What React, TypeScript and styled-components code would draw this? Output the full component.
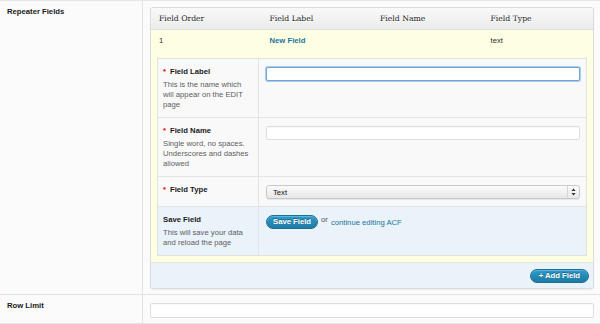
import React from 'react';
import styled, { createGlobalStyle, css } from 'styled-components';

const GlobalStyle = createGlobalStyle`
  body {
    margin: 0;
    background: #fbfbfb;
    font-family: "Liberation Sans", Arial, Helvetica, sans-serif;
    font-size: 7.7px;
    color: #333;
  }
`;

const Page = styled.div`
  width: 600px;
  height: 324px;
  background: #fbfbfb;
  overflow: hidden;
`;

const SettingRow = styled.div<{ first?: boolean }>`
  display: grid;
  grid-template-columns: 143px 1fr;
  border-top: ${({ first }) => (first ? '1px solid #e6e6e6' : 'none')};
  border-bottom: 1px solid #e3e3e3;
`;

const SettingLabel = styled.div`
  border-right: 1px solid #e3e3e3;
  padding: 6px 7px;
  font-weight: bold;
  color: #1a1a1a;
  line-height: 10px;
`;

const SettingValue = styled.div<{ compact?: boolean }>`
  padding: ${({ compact }) => (compact ? '8px 6px 5px 7px' : '6px 6px 5px 7px')};
`;

const Repeater = styled.div`
  border: 1px solid #dcdcdc;
  border-radius: 3px;
  box-shadow: 0 1px 1px rgba(0, 0, 0, 0.06);
  background: #eaf2fa;
  overflow: hidden;
`;

const Columns = styled.div`
  display: grid;
  grid-template-columns: repeat(4, 1fr);
`;

const HeadRow = styled(Columns)`
  height: 21px;
  align-items: center;
  background: linear-gradient(#f9f9f9, #ebebeb);
  border-bottom: 1px solid #e0e0e0;
`;

const HeadCell = styled.div`
  padding-left: 8px;
  font-family: "DejaVu Serif", Georgia, serif;
  font-size: 7.7px;
  color: #222;
  text-shadow: 0 1px 0 #fff;
`;

const FieldBlock = styled.div`
  background: #fefee3;
  padding: 0 6px 6px 6px;
  border-bottom: 1px solid #e6e6d4;
`;

const SummaryRow = styled(Columns)`
  height: 21px;
  align-items: center;
  margin: 0 -6px 7px -6px;
`;

const SummaryCell = styled.div`
  padding-left: 8px;
  color: #333;
`;

const FieldLink = styled.a`
  color: #21759b;
  font-weight: bold;
  text-decoration: none;
`;

const FormTable = styled.div`
  border: 1px solid #e1e1e1;
  background: #f9f9f9;
`;

const FormRow = styled.div<{ tone?: 'blue' }>`
  display: grid;
  grid-template-columns: 101px 1fr;
  border-top: 1px solid #e4e4e4;
  background: ${({ tone }) => (tone === 'blue' ? '#eaf2fa' : '#f9f9f9')};
  &:first-child {
    border-top: none;
  }
`;

const FormLabel = styled.div`
  border-right: 1px solid #e4e4e4;
  padding: 8px 7px 7px 5px;
`;

const LabelTitle = styled.div<{ required?: boolean }>`
  font-weight: bold;
  color: #1a1a1a;
  line-height: 10px;
  margin-bottom: 3px;
  ${({ required }) =>
    required &&
    css`
      &::before {
        content: '*';
        color: #e00;
        margin-right: 4px;
      }
    `}
`;

const Desc = styled.div`
  color: #5e5e5e;
  line-height: 10px;
`;

const FormInput = styled.div`
  padding: 8px 6px 7px 7px;
  display: flex;
  align-items: flex-start;
`;

const TextInput = styled.div<{ focused?: boolean }>`
  flex: 1;
  height: 14px;
  box-sizing: border-box;
  background: #fff;
  border-radius: 2px;
  border: 1px solid ${({ focused }) => (focused ? '#6fa6dc' : '#dedede')};
  box-shadow: ${({ focused }) =>
    focused ? '0 0 0 1px rgba(110, 165, 220, 0.55)' : 'inset 0 1px 1px rgba(0,0,0,0.03)'};
`;

const SelectBox = styled.div`
  flex: 1;
  height: 14px;
  box-sizing: border-box;
  display: flex;
  align-items: center;
  border: 1px solid #c9c9c9;
  border-radius: 3px;
  background: linear-gradient(#fbfbfb, #e7e7e7);
  box-shadow: 0 1px 1px rgba(0, 0, 0, 0.08);
`;

const SelectText = styled.span`
  flex: 1;
  padding-left: 6px;
  color: #111;
`;

const SelectArrow = styled.span`
  width: 11px;
  height: 12px;
  display: flex;
  align-items: center;
  justify-content: center;
  border-left: 1px solid #d6d6d6;
`;

const ActionLine = styled.div`
  display: flex;
  align-items: center;
  gap: 3px;
  white-space: nowrap;
`;

const PillButton = styled.button<{ wide?: boolean }>`
  height: 14px;
  padding: 0 ${({ wide }) => (wide ? '8px' : '6px')};
  border-radius: 8px;
  border: 1px solid #1f6f94;
  background: linear-gradient(#2d9bcc, #1f7aa3);
  color: #fff;
  font-family: inherit;
  font-size: 7.7px;
  font-weight: bold;
  line-height: 12px;
  text-shadow: 0 -1px 0 rgba(0, 0, 0, 0.35);
  box-shadow: inset 0 1px 0 rgba(255, 255, 255, 0.25);
  cursor: pointer;
`;

const OrText = styled.span`
  color: #555;
  position: relative;
  top: -3px;
`;

const PlainLink = styled.a`
  color: #21759b;
  text-decoration: none;
`;

const Footer = styled.div`
  height: 25px;
  display: flex;
  align-items: center;
  justify-content: flex-end;
  padding-right: 4px;
  background: #eaf2fa;
`;

const RowLimitInput = styled(TextInput)`
  height: 15px;
`;

function UpDownIcon() {
  return (
    <svg width="5" height="8" viewBox="0 0 5 8">
      <path d="M2.5 0.5 L4.6 3 H0.4 Z" fill="#333" />
      <path d="M2.5 7.5 L4.6 5 H0.4 Z" fill="#333" />
    </svg>
  );
}

export default function App() {
  return (
    <Page>
      <GlobalStyle />
      <SettingRow first>
        <SettingLabel>Repeater Fields</SettingLabel>
        <SettingValue>
          <Repeater>
            <HeadRow>
              <HeadCell>Field Order</HeadCell>
              <HeadCell>Field Label</HeadCell>
              <HeadCell>Field Name</HeadCell>
              <HeadCell>Field Type</HeadCell>
            </HeadRow>
            <FieldBlock>
              <SummaryRow>
                <SummaryCell>1</SummaryCell>
                <SummaryCell>
                  <FieldLink href="#">New Field</FieldLink>
                </SummaryCell>
                <SummaryCell />
                <SummaryCell>text</SummaryCell>
              </SummaryRow>
              <FormTable>
                <FormRow>
                  <FormLabel>
                    <LabelTitle required>Field Label</LabelTitle>
                    <Desc>This is the name which will appear on the EDIT page</Desc>
                  </FormLabel>
                  <FormInput>
                    <TextInput focused />
                  </FormInput>
                </FormRow>
                <FormRow>
                  <FormLabel>
                    <LabelTitle required>Field Name</LabelTitle>
                    <Desc>Single word, no spaces. Underscores and dashes allowed</Desc>
                  </FormLabel>
                  <FormInput>
                    <TextInput />
                  </FormInput>
                </FormRow>
                <FormRow>
                  <FormLabel>
                    <LabelTitle required>Field Type</LabelTitle>
                  </FormLabel>
                  <FormInput>
                    <SelectBox>
                      <SelectText>Text</SelectText>
                      <SelectArrow>
                        <UpDownIcon />
                      </SelectArrow>
                    </SelectBox>
                  </FormInput>
                </FormRow>
                <FormRow tone="blue">
                  <FormLabel>
                    <LabelTitle>Save Field</LabelTitle>
                    <Desc>This will save your data and reload the page</Desc>
                  </FormLabel>
                  <FormInput>
                    <ActionLine>
                      <PillButton>Save Field</PillButton>
                      <OrText>or</OrText>
                      <PlainLink href="#">continue editing ACF</PlainLink>
                    </ActionLine>
                  </FormInput>
                </FormRow>
              </FormTable>
            </FieldBlock>
            <Footer>
              <PillButton wide>+ Add Field</PillButton>
            </Footer>
          </Repeater>
        </SettingValue>
      </SettingRow>
      <SettingRow>
        <SettingLabel>Row Limit</SettingLabel>
        <SettingValue compact>
          <RowLimitInput />
        </SettingValue>
      </SettingRow>
    </Page>
  );
}
